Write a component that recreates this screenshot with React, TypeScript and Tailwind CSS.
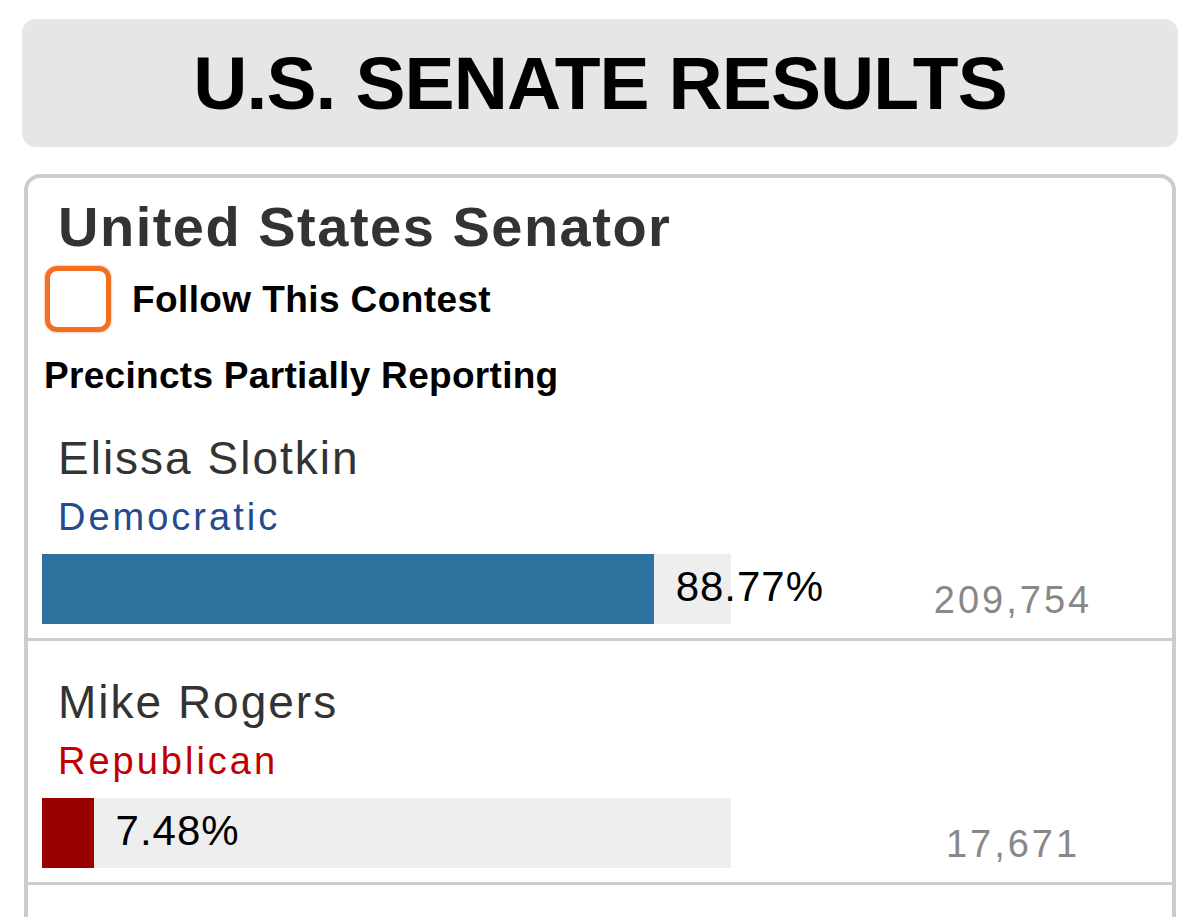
import React from "react";

interface Candidate {
  name: string;
  party: string;
  partyColor: string;
  barColor: string;
  pct: number;
  votes: string;
}

const candidates: Candidate[] = [
  {
    name: "Elissa Slotkin",
    party: "Democratic",
    partyColor: "text-[#244a8f]",
    barColor: "bg-[#2e73a0]",
    pct: 88.77,
    votes: "209,754",
  },
  {
    name: "Mike Rogers",
    party: "Republican",
    partyColor: "text-[#c00000]",
    barColor: "bg-[#990000]",
    pct: 7.48,
    votes: "17,671",
  },
];

function CandidateRow({ c }: { c: Candidate }) {
  return (
    <div className="border-b-[3px] border-[#cccccc] px-[14px] pt-[38px] pb-[14px]">
      <div className="ml-[16px] text-[46px] leading-none tracking-[2px] text-[#333333]">{c.name}</div>
      <div className={`ml-[16px] mt-[17px] text-[38px] leading-none tracking-[3px] ${c.partyColor}`}>
        {c.party}
      </div>
      <div className="mt-[18px] flex">
        <div className="flex h-[70px] w-[689px] shrink-0 items-center bg-[#eeeeee]">
          <div className={`h-full shrink-0 ${c.barColor}`} style={{ width: `${c.pct}%` }} />
          <span className="mb-[4px] ml-[22px] shrink-0 whitespace-nowrap text-[42px] leading-none tracking-[1px] text-black">
            {c.pct.toFixed(2)}%
          </span>
        </div>
        <div className="mb-[5px] flex-1 self-end pl-[137px] text-center text-[38px] leading-none tracking-[3px] text-[#888888]">
          {c.votes}
        </div>
      </div>
    </div>
  );
}

export default function App() {
  return (
    <div className="min-h-screen bg-white px-[22px] pt-[19px] font-['Liberation_Sans',Arial,sans-serif]">
      <div className="flex h-[128px] items-center justify-center rounded-[14px] bg-[#e6e6e6]">
        <h1 className="text-[75px] font-bold leading-none tracking-[-0.9px] text-black">U.S. SENATE RESULTS</h1>
      </div>

      <div className="mx-[2px] mt-[27px] rounded-t-[16px] border-x-[4px] border-t-[4px] border-[#cccccc]">
        <div className="px-[14px] pt-[21px]">
          <h2 className="ml-[16px] text-[56px] font-bold leading-none tracking-[1.5px] text-[#333333]">
            United States Senator
          </h2>
          <label className="mt-[11px] ml-[3px] flex items-center gap-[21px]">
            <span className="h-[66px] w-[66px] shrink-0 rounded-[12px] border-[5px] border-[#f26f21] shadow-[0_0_2px_#f26f21]" />
            <span className="text-[37px] font-bold leading-none tracking-[0.4px] text-black">Follow This Contest</span>
          </label>
          <div className="mt-[25px] mb-[3px] ml-[2px] text-[37px] font-bold leading-none tracking-[0.3px] text-black">
            Precincts Partially Reporting
          </div>
        </div>

        {candidates.map((c) => (
          <CandidateRow key={c.name} c={c} />
        ))}

        <div className="h-[120px]" />
      </div>
    </div>
  );
}
